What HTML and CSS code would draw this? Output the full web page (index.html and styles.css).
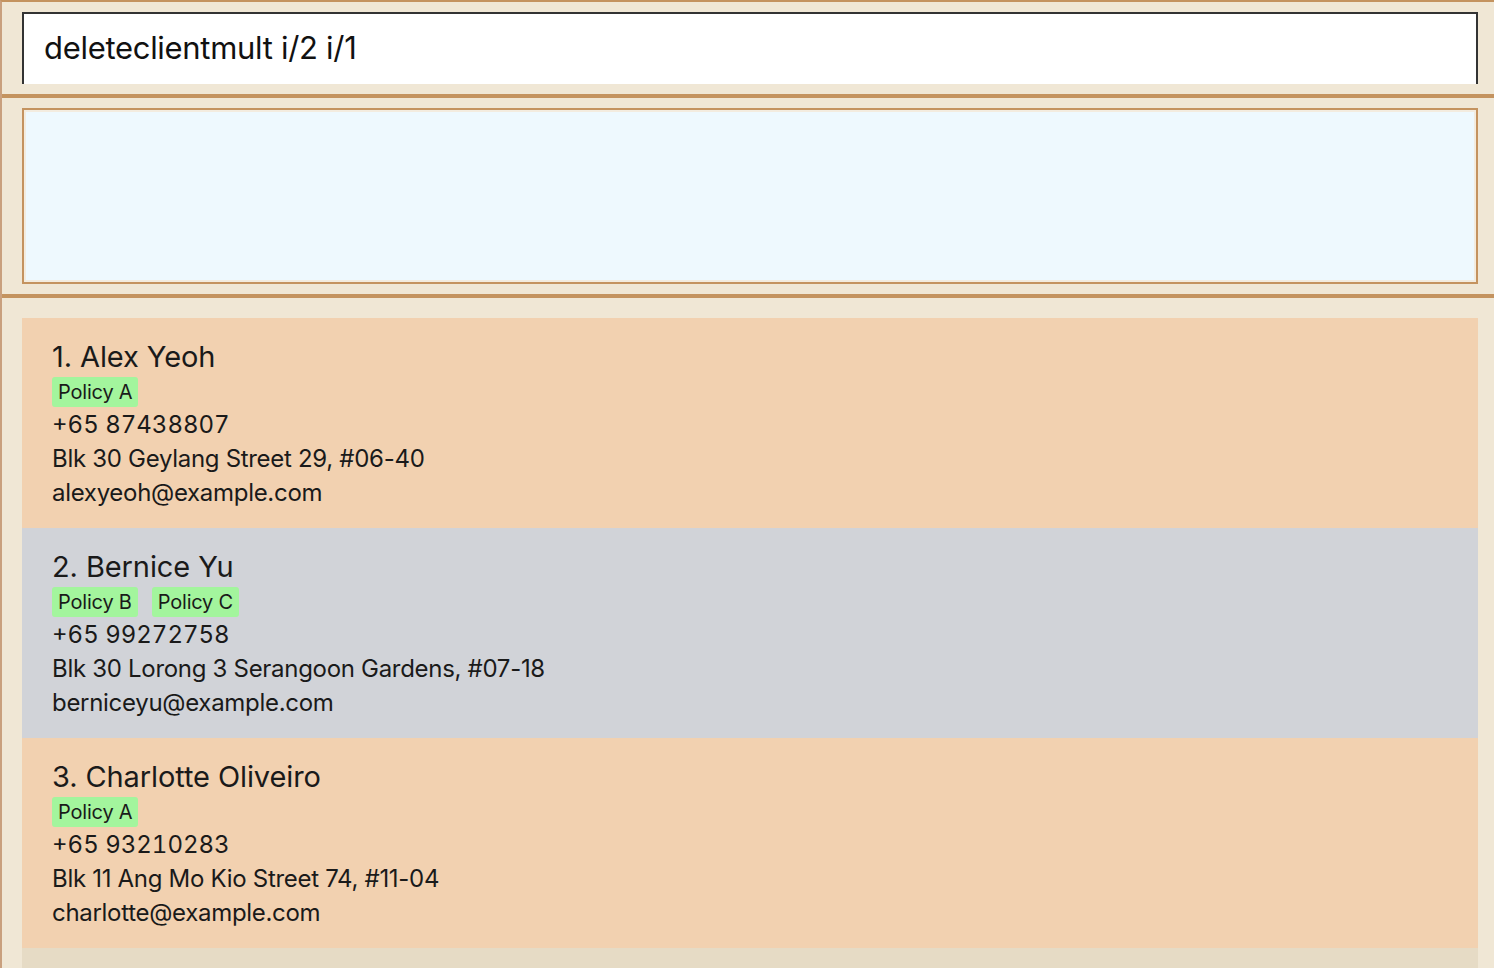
FILE: index.html
```html
<!DOCTYPE html>
<html>
<head>
<meta charset="utf-8">
<link rel="stylesheet" href="styles.css">
</head>
<body>
<div class="app">
  <div class="command-pane">
    <div class="command-box">deleteclientmult i/2 i/1</div>
  </div>
  <div class="separator"></div>
  <div class="result-pane">
    <div class="result-box"></div>
  </div>
  <div class="separator"></div>
  <div class="list-pane">
    <div class="card card-odd">
      <div class="name">1. Alex Yeoh</div>
      <div class="tags"><span class="tag">Policy A</span></div>
      <div class="line phone">+65 87438807</div>
      <div class="line">Blk 30 Geylang Street 29, #06-40</div>
      <div class="line">alexyeoh@example.com</div>
    </div>
    <div class="card card-even">
      <div class="name">2. Bernice Yu</div>
      <div class="tags"><span class="tag">Policy B</span><span class="tag">Policy C</span></div>
      <div class="line phone">+65 99272758</div>
      <div class="line">Blk 30 Lorong 3 Serangoon Gardens, #07-18</div>
      <div class="line">berniceyu@example.com</div>
    </div>
    <div class="card card-odd">
      <div class="name">3. Charlotte Oliveiro</div>
      <div class="tags"><span class="tag">Policy A</span></div>
      <div class="line phone">+65 93210283</div>
      <div class="line">Blk 11 Ang Mo Kio Street 74, #11-04</div>
      <div class="line">charlotte@example.com</div>
    </div>
    <div class="card card-empty"></div>
  </div>
</div>
</body>
</html>
```

FILE: styles.css
```css
html, body {
  margin: 0;
  padding: 0;
}
body {
  font-family: Inter, "Noto Sans", "Liberation Sans", sans-serif;
  color: #1a1a1a;
  background: #f0e7d5;
  overflow: hidden;
}
.app {
  height: 968px;
  box-sizing: border-box;
  border-left: 2px solid #c9a07e;
  border-top: 2px solid #c4935f;
  background: #f0e7d5;
  display: flex;
  flex-direction: column;
}
.command-pane {
  padding: 10px 16px 10px 20px;
}
.command-box {
  height: 70px;
  background: #ffffff;
  border: 2px solid #333333;
  border-bottom: none;
  box-sizing: content-box;
  padding-left: 20px;
  font-size: 31px;
  line-height: 68px;
  color: #111111;
  letter-spacing: -0.3px;
}
.separator {
  height: 4px;
  background: #c4935f;
}
.result-pane {
  padding: 10px 16px 10px 20px;
}
.result-box {
  height: 172px;
  border: 2px solid #c4935f;
  background: #eef9fe;
  box-shadow: inset 0 0 0 2px #f3ecdf;
}
.list-pane {
  padding: 20px 16px 0 20px;
  flex: 1;
  display: flex;
  flex-direction: column;
}
.card {
  height: 210px;
  box-sizing: border-box;
  padding: 20px 30px 0 30px;
}
.card-odd {
  background: #f2d1b0;
}
.card-even {
  background: #d1d3d8;
}
.card-empty {
  background: #e6dbc5;
  flex: 1;
}
.name {
  font-size: 29px;
  line-height: 38px;
  letter-spacing: -0.1px;
}
.tags {
  height: 32px;
  display: flex;
  align-items: center;
  gap: 14px;
}
.tag {
  background: #a3f59d;
  border-radius: 3px;
  height: 30px;
  line-height: 30px;
  padding: 0 6px;
  font-size: 20px;
  letter-spacing: -0.2px;
}
.line {
  font-size: 24px;
  line-height: 34px;
  letter-spacing: -0.3px;
}
.phone {
  font-variant-numeric: tabular-nums;
  letter-spacing: 0;
}
```
